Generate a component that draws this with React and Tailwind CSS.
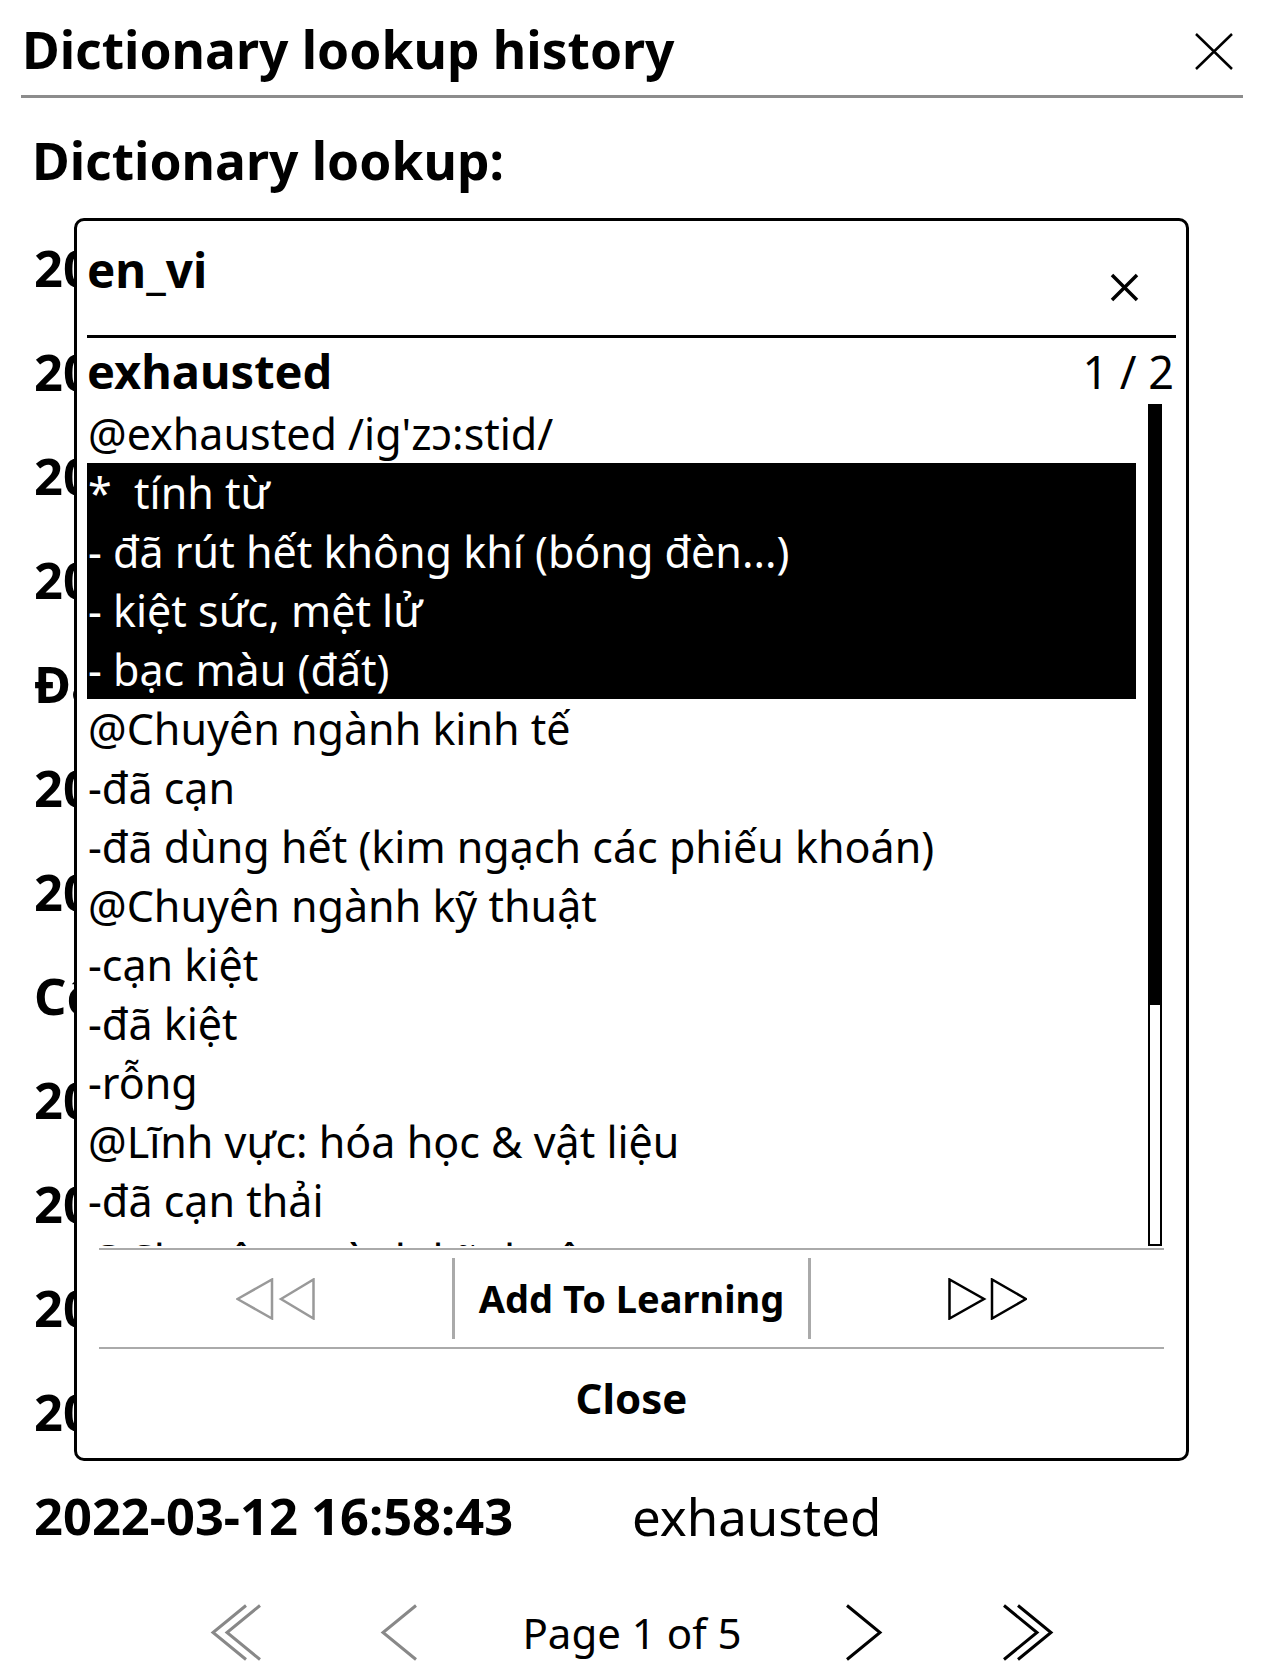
import React from 'react';

const historyRows = [
  { key: '2022-03-14 21:47:05', value: 'reluctant' },
  { key: '2022-03-14 21:12:38', value: 'meadow' },
  { key: '2022-03-13 22:05:51', value: 'linger' },
  { key: '2022-03-13 20:44:19', value: 'solemn' },
  { key: 'Đắc Nhân Tâm', value: '' },
  { key: '2022-03-13 09:31:02', value: 'grief' },
  { key: '2022-03-12 23:18:47', value: 'weary' },
  { key: 'Cô gái đến từ hôm qua', value: '' },
  { key: '2022-03-12 22:40:11', value: 'glimpse' },
  { key: '2022-03-12 21:56:30', value: 'drowsy' },
  { key: '2022-03-12 19:03:26', value: 'vivid' },
  { key: '2022-03-12 17:20:09', value: 'stubborn' },
  { key: '2022-03-12 16:58:43', value: 'exhausted' },
];

const definition = [
  { text: "@exhausted /ig'zɔ:stid/" },
  { text: '*  tính từ', selected: true },
  { text: '- đã rút hết không khí (bóng đèn...)', selected: true },
  { text: '- kiệt sức, mệt lử', selected: true },
  { text: '- bạc màu (đất)', selected: true },
  { text: '@Chuyên ngành kinh tế' },
  { text: '-đã cạn' },
  { text: '-đã dùng hết (kim ngạch các phiếu khoán)' },
  { text: '@Chuyên ngành kỹ thuật' },
  { text: '-cạn kiệt' },
  { text: '-đã kiệt' },
  { text: '-rỗng' },
  { text: '@Lĩnh vực: hóa học & vật liệu' },
  { text: '-đã cạn thải' },
  { text: '@Chuyên ngành kỹ thuật' },
  { text: '-bị rút hết' },
];

function Chevron({ dir = 'left', double = false, color = '#000' }) {
  // thin chevrons used by the page navigation
  const single = dir === 'left' ? 'M36 1.5 L3 28.5 L36 55.5' : 'M2 1.5 L35 28.5 L2 55.5';
  const second = dir === 'left' ? 'M50 1.5 L17 28.5 L50 55.5' : 'M16 1.5 L49 28.5 L16 55.5';
  return (
    <svg width={double ? 52 : 38} height="57" viewBox={double ? '0 0 52 57' : '0 0 38 57'} fill="none">
      <path d={single} stroke={color} strokeWidth="3" />
      {double && <path d={second} stroke={color} strokeWidth="3" />}
    </svg>
  );
}

export default function App() {
  return (
    <div className="relative h-[1680px] w-[1264px] overflow-hidden bg-white font-['Noto_Sans',sans-serif] text-black">
      {/* title bar */}
      <div className="flex h-[95px] items-start justify-between pl-[22px] pr-[30px] pt-[11px]">
        <h1 className="text-[51.5px] font-bold leading-normal">Dictionary lookup history</h1>
        <svg className="mt-[21px]" width="40" height="39" viewBox="0 0 40 39" fill="none">
          <path d="M2 2 L38 37 M38 2 L2 37" stroke="#000" strokeWidth="2.5" />
        </svg>
      </div>
      <div className="mx-[21px] h-[3px] bg-[#8c8c8c]" />

      <div className="h-[118px] pl-[32px] pt-[28px] text-[51.5px] font-bold leading-[68px]">
        Dictionary lookup:
      </div>

      {historyRows.map((row, i) => (
        <div key={i} className="flex h-[104px] items-center pl-[34px] text-[51px] leading-[104px] whitespace-nowrap">
          <span className="w-[598px] shrink-0 text-[50.6px] font-bold">{row.key}</span>
          <span>{row.value}</span>
        </div>
      ))}

      {/* pagination */}
      <div className="flex h-[112px] items-center justify-center pt-[16px]">
        <div className="flex w-[100px] justify-center">
          <Chevron dir="left" double color="#888" />
        </div>
        <div className="ml-[63px] flex w-[100px] justify-center">
          <Chevron dir="left" color="#888" />
        </div>
        <div className="ml-[33px] w-[300px] text-center text-[42px] leading-normal">Page 1 of 5</div>
        <div className="ml-[32px] flex w-[100px] justify-center">
          <Chevron dir="right" />
        </div>
        <div className="ml-[64px] flex w-[100px] justify-center">
          <Chevron dir="right" double />
        </div>
      </div>

      {/* dictionary popup */}
      <div className="absolute left-[74px] top-[218px] flex h-[1243px] w-[1115px] flex-col rounded-[10px] border-[3px] border-black bg-white">
        <div className="flex h-[114px] items-start justify-between px-[10px] pt-[13px]">
          <span className="text-[47.5px] font-bold leading-normal">en_vi</span>
          <svg className="mr-[37px] mt-[39px]" width="29" height="29" viewBox="0 0 29 29" fill="none">
            <path d="M2 2 L27 27 M27 2 L2 27" stroke="#000" strokeWidth="3.5" />
          </svg>
        </div>
        <div className="mx-[10px] h-[3px] bg-black" />

        <div className="flex h-[66px] items-start justify-between pl-[10px] pr-[12px] text-[45px] leading-normal">
          <span className="-mt-[2px] text-[47px] font-bold">exhausted</span>
          <span>1 / 2</span>
        </div>

        <div className="flex h-[842px] pl-[10px]">
          <div className="h-full w-[1049px] overflow-hidden">
            {definition.map((line, i) => (
              <div
                key={i}
                className={`h-[59px] whitespace-pre pl-[1px] text-[43px] leading-[59px] ${line.selected ? 'bg-black text-white' : ''}`}
              >
                {line.text}
              </div>
            ))}
          </div>
          <div className="ml-[12px] h-full w-[14px] border-2 border-black">
            <div className="h-[599px] bg-black" />
          </div>
        </div>

        <div className="mx-[22px] mt-[2px] h-[2px] bg-[#aaa]" />
        <div className="mx-[22px] flex h-[97px]">
          <div className="flex flex-1 items-center justify-center">
            <svg width="79" height="42" viewBox="0 0 79 42" fill="none">
              <path d="M1.5 21 L36 1.5 L36 40.5 Z M45 21 L77.5 1.5 L77.5 40.5 Z" stroke="#999" strokeWidth="2.5" />
            </svg>
          </div>
          <div className="my-[8px] w-[3px] bg-[#aaa]" />
          <div className="flex flex-1 items-center justify-center text-[38px] font-bold">Add To Learning</div>
          <div className="my-[8px] w-[3px] bg-[#aaa]" />
          <div className="flex flex-1 items-center justify-center">
            <svg width="79" height="42" viewBox="0 0 79 42" fill="none">
              <path d="M1.5 1.5 L1.5 40.5 L36 21 Z M44 1.5 L44 40.5 L78 21 Z" stroke="#000" strokeWidth="2.5" />
            </svg>
          </div>
        </div>
        <div className="mx-[22px] h-[2px] bg-[#aaa]" />
        <div className="flex flex-1 items-center justify-center pb-[12px] text-[42px] font-bold">Close</div>
      </div>
    </div>
  );
}
